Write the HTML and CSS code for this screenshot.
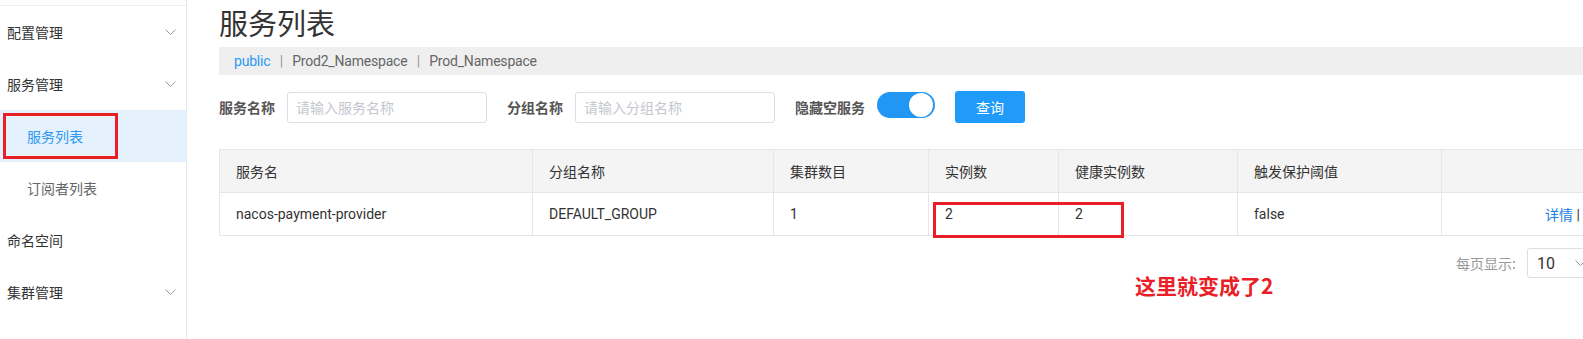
FILE: index.html
```html
<!DOCTYPE html>
<html lang="zh-CN">
<head>
    <meta charset="UTF-8">
    <meta name="viewport" content="width=device-width, initial-scale=1.0">
    <title>服务列表 - Nacos</title>
    <link rel="stylesheet" href="styles.css">
</head>
<body>
    <div class="layout">
        <!-- 侧边菜单 -->
        <aside class="sidebar">
            <ul class="menu">
                <li class="menu-item">配置管理
                    <svg class="arrow" width="11" height="6" viewBox="0 0 11 6"><polyline points="0.5,0.5 5.5,5.5 10.5,0.5"/></svg>
                </li>
                <li class="menu-item">服务管理
                    <svg class="arrow" width="11" height="6" viewBox="0 0 11 6"><polyline points="0.5,0.5 5.5,5.5 10.5,0.5"/></svg>
                </li>
                <li class="menu-item sub active">服务列表<span class="mark mark-menu"></span></li>
                <li class="menu-item sub">订阅者列表</li>
                <li class="menu-item">命名空间</li>
                <li class="menu-item">集群管理
                    <svg class="arrow" width="11" height="6" viewBox="0 0 11 6"><polyline points="0.5,0.5 5.5,5.5 10.5,0.5"/></svg>
                </li>
            </ul>
        </aside>

        <!-- 主内容 -->
        <main class="content">
            <h1 class="page-title">服务列表</h1>

            <div class="ns-bar">
                <a href="#" class="ns-link current">public</a>
                <span class="ns-sep">|</span>
                <a href="#" class="ns-link">Prod2_Namespace</a>
                <span class="ns-sep">|</span>
                <a href="#" class="ns-link">Prod_Namespace</a>
            </div>

            <form class="search-bar">
                <label class="field-label">服务名称</label>
                <input class="field-input" type="text" placeholder="请输入服务名称">
                <label class="field-label">分组名称</label>
                <input class="field-input" type="text" placeholder="请输入分组名称">
                <label class="field-label">隐藏空服务</label>
                <span class="switch"><span class="knob"></span></span>
                <button type="button" class="btn-query">查询</button>
            </form>

            <div class="table-wrap">
                <table class="service-table">
                    <colgroup>
                        <col style="width: 313px">
                        <col style="width: 241px">
                        <col style="width: 155px">
                        <col style="width: 130px">
                        <col style="width: 179px">
                        <col style="width: 204px">
                        <col style="width: 155px">
                    </colgroup>
                    <thead>
                        <tr>
                            <th>服务名</th>
                            <th>分组名称</th>
                            <th>集群数目</th>
                            <th>实例数</th>
                            <th>健康实例数</th>
                            <th>触发保护阈值</th>
                            <th></th>
                        </tr>
                    </thead>
                    <tbody>
                        <tr>
                            <td>nacos-payment-provider</td>
                            <td>DEFAULT_GROUP</td>
                            <td>1</td>
                            <td class="marked">2<span class="mark mark-cell"></span></td>
                            <td>2</td>
                            <td>false</td>
                            <td class="ops"><a href="#">详情</a> |</td>
                        </tr>
                    </tbody>
                </table>

                <div class="pager">
                    <span class="pager-label">每页显示:</span>
                    <span class="pager-select">10
                        <svg class="arrow" width="11" height="6" viewBox="0 0 11 6"><polyline points="0.5,0.5 5.5,5.5 10.5,0.5"/></svg>
                    </span>
                </div>
            </div>

            <div class="note">这里就变成了2</div>
        </main>
    </div>
</body>
</html>
```

FILE: styles.css
```css
/* 基础 */
body {
    margin: 0;
    padding: 0;
    background: #fff;
    color: #333;
    font-family: Roboto, "Noto Sans CJK SC", sans-serif;
    font-size: 14px;
}

.layout {
    display: flex;
    height: 100vh;
    overflow: hidden;
}

/* 侧边菜单 */
.sidebar {
    width: 186px;
    flex-shrink: 0;
    border-right: 1px solid #e8e8e8;
    padding-top: 5px;
}

.menu {
    list-style: none;
    margin: 0;
    padding: 0;
    border-top: 1px solid #eee;
}

.menu-item {
    position: relative;
    height: 52px;
    display: flex;
    align-items: center;
    justify-content: space-between;
    padding: 0 10px 0 7px;
    color: #333;
    font-family: "Noto Sans CJK SC", sans-serif;
}

.menu-item.sub {
    padding-left: 27px;
    color: #666;
}

.menu-item.active {
    background: #e5f2fe;
    color: #2f98f2;
}

.arrow polyline {
    fill: none;
    stroke: #999;
    stroke-width: 1;
}

/* 红框标注 */
.mark {
    position: absolute;
    border: 3px solid #e91e26;
    box-sizing: border-box;
}

.mark-menu {
    left: 3px;
    top: 3px;
    width: 115px;
    height: 46px;
}

.mark-cell {
    left: 4px;
    top: 9px;
    width: 191px;
    height: 36px;
}

/* 主内容 */
.content {
    position: relative;
    flex: 1;
    padding-left: 32px;
    overflow: hidden;
}

.page-title {
    margin: 0;
    padding-top: 2px;
    font-family: "Noto Sans CJK SC", sans-serif;
    font-size: 29px;
    font-weight: 400;
    line-height: 40px;
    color: #333;
}

.ns-bar {
    margin-top: 5px;
    height: 28px;
    line-height: 28px;
    background: #efefef;
    padding-left: 15px;
    color: #666;
    letter-spacing: -0.2px;
}

.ns-link {
    color: #666;
    text-decoration: none;
}

.ns-link.current {
    color: #2a9af5;
}

.ns-sep {
    color: #999;
    margin: 0 6px;
}

/* 搜索栏 */
.search-bar {
    display: flex;
    align-items: center;
    margin-top: 16px;
    height: 32px;
}

.field-label {
    font-family: "Noto Sans CJK SC", sans-serif;
    font-weight: 700;
    color: #555;
    margin-right: 12px;
}

.field-input {
    width: 200px;
    height: 31px;
    box-sizing: border-box;
    border: 1px solid #dcdee3;
    border-radius: 3px;
    padding: 0 8px;
    margin-right: 20px;
    font-family: "Noto Sans CJK SC", sans-serif;
    font-size: 14px;
}

.field-input::placeholder {
    color: #c4c6cf;
}

.switch {
    position: relative;
    width: 58px;
    height: 26px;
    border-radius: 13px;
    background: #2196f3;
    margin-right: 20px;
    margin-bottom: 5px;
}

.knob {
    position: absolute;
    right: 2px;
    top: 1px;
    width: 24px;
    height: 24px;
    border-radius: 50%;
    background: #fff;
}

.btn-query {
    width: 70px;
    height: 32px;
    border: none;
    border-radius: 3px;
    background: #209bfa;
    color: #fff;
    font-family: "Noto Sans CJK SC", sans-serif;
    font-size: 14px;
    cursor: pointer;
}

/* 表格 */
.table-wrap {
    width: 1377px;
    margin-top: 26px;
}

.service-table {
    width: 1377px;
    table-layout: fixed;
    border-collapse: collapse;
}

.service-table th,
.service-table td {
    height: 43px;
    padding: 0 16px;
    border: 1px solid #e6e6e6;
    text-align: left;
    font-weight: 400;
    color: #333;
    white-space: nowrap;
    box-sizing: border-box;
}

.service-table th {
    background: #f4f4f4;
}

.service-table td.marked {
    position: relative;
}

.service-table td.ops {
    text-align: right;
}

.ops a {
    color: #1a7fe0;
    text-decoration: none;
}

/* 分页 */
.pager {
    display: flex;
    justify-content: flex-end;
    align-items: center;
    margin-top: 12px;
}

.pager-label {
    color: #999;
    margin-right: 11px;
    font-family: "Noto Sans CJK SC", sans-serif;
}

.pager-select {
    width: 69px;
    height: 30px;
    box-sizing: border-box;
    border: 1px solid #dcdee3;
    border-radius: 3px;
    display: flex;
    align-items: center;
    padding-left: 9px;
    font-size: 16px;
    color: #333;
}

.pager-select .arrow {
    margin-left: 20px;
}

/* 标注文字 */
.note {
    position: absolute;
    left: 948px;
    top: 272px;
    color: #e91e26;
    font-family: "Noto Sans CJK SC", sans-serif;
    font-size: 21px;
    font-weight: 700;
    line-height: 26px;
}
```
